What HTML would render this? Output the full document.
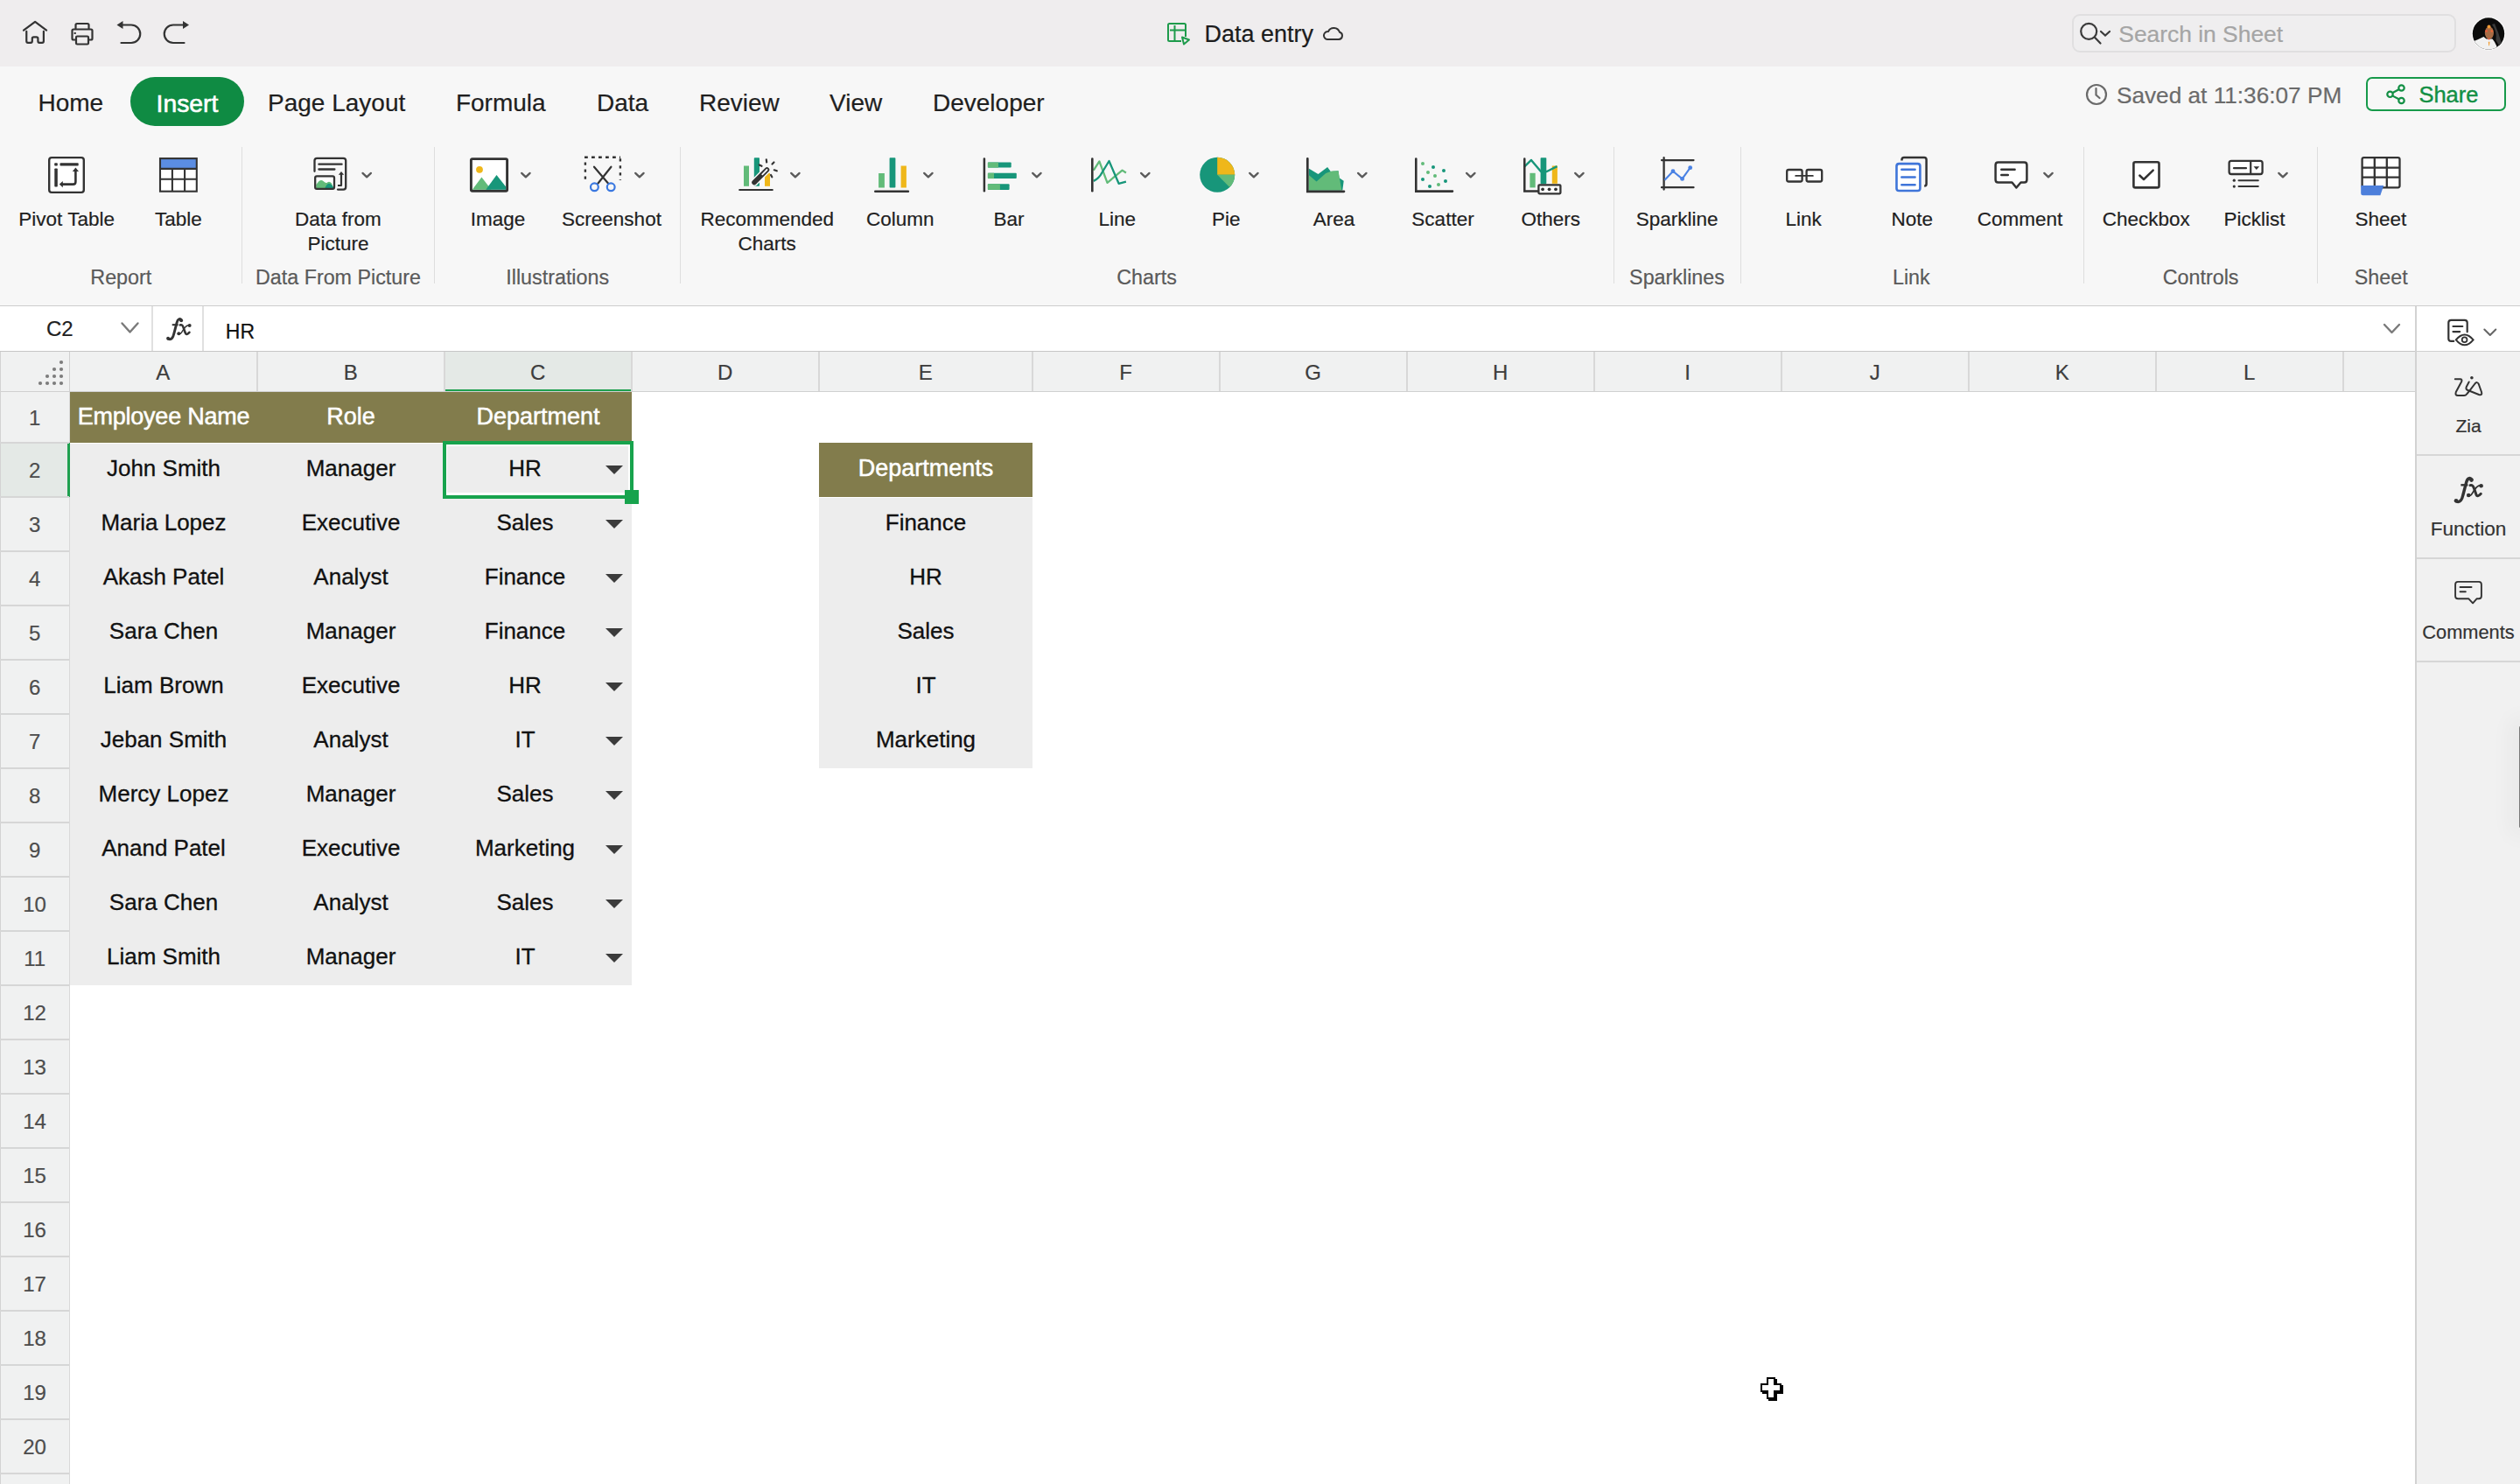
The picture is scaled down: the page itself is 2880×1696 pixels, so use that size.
<!DOCTYPE html>
<html><head><meta charset="utf-8"><title>Data entry</title>
<style>
html,body{margin:0;padding:0;width:2880px;height:1696px;overflow:hidden;background:#fff;}
body{position:relative;font-family:'Liberation Sans', sans-serif;}
.t{position:absolute;white-space:nowrap;line-height:1;-webkit-text-stroke:0.2px currentColor;}
.r{position:absolute;}
.s{position:absolute;overflow:visible;}
</style></head><body>
<div class="r" style="left:0px;top:0px;width:2880px;height:76px;background:#efedee;"></div>
<svg class="s" style="left:20px;top:18px;" width="200" height="40" viewBox="20 18 200 40">
<g fill="none" stroke="#333333" stroke-width="2.2" stroke-linejoin="round" stroke-linecap="round">
<path d="M27,34.7 L40.1,24.8 L53.1,34.7"/>
<path d="M30.25,35.8 V47 Q30.25,48.8 32,48.8 H35 Q36.8,48.8 36.8,47 V44 Q36.8,42.3 38.5,42.3 H41.7 Q43.4,42.3 43.4,44 V47 Q43.4,48.8 45.1,48.8 H48.1 Q49.9,48.8 49.9,47 V35.8"/>
<path d="M86.5,32.5 V28.5 Q86.5,27 88,27 H100 Q101.5,27 101.5,28.5 V32.5"/>
<path d="M86.5,45.5 H84 Q82.5,45.5 82.5,44 V35 Q82.5,33.5 84,33.5 H104 Q105.5,33.5 105.5,35 V44 Q105.5,45.5 104,45.5 H101.5"/>
<rect x="87" y="41.5" width="14" height="9" rx="1.2"/>
<path d="M139.5,28.5 H150 A10.25,10.25 0 0 1 150,49 H138.5"/>
<path d="M209.5,28.5 H198 A10.25,10.25 0 0 0 198,49 H210.5"/>
</g>
<circle cx="85.7" cy="37.9" r="1.2" fill="#333333"/>
<path d="M133.5,28.5 L140.5,24 L140.5,33 Z" fill="#333333"/>
<path d="M216,28.5 L209,24 L209,33 Z" fill="#333333"/>
</svg>
<svg class="s" style="left:1325px;top:20px;" width="45" height="40" viewBox="1325 20 45 40">
<g fill="none" stroke="#1e9b4b" stroke-width="2" stroke-linejoin="round">
<path d="M1350,47 H1336.5 Q1335,47 1335,45.5 V28.5 Q1335,27 1336.5,27 H1353.5 Q1355,27 1355,28.5 V42"/>
<path d="M1337,34.5 H1355 M1342.5,29 V47"/>
<path d="M1351,42.5 L1359,45.5 L1353,50.5 Z" fill="#efeeef"/>
</g></svg>
<div class="t" style="left:1376.40px;top:25.94px;font-size:27px;color:#1c1c1c;font-weight:400;font-family:'Liberation Sans', sans-serif;">Data entry</div>
<svg class="s" style="left:1508px;top:28px;" width="32" height="22" viewBox="1508 28 32 22"><path d="M1517,45 H1530 A4.2,4.2 0 0 0 1531,36.8 A7,7 0 0 0 1518,36 A4.5,4.5 0 0 0 1517,45 Z" fill="none" stroke="#333" stroke-width="2"/></svg>
<div class="r" style="left:2368px;top:16px;width:439px;height:44px;border:2px solid #e0dfe0;border-radius:9px;background:#efeeef;box-sizing:border-box"></div>
<svg class="s" style="left:2370px;top:20px;" width="50" height="36" viewBox="2370 20 50 36"><g fill="none" stroke="#3a3a3a" stroke-width="2.2" stroke-linecap="round"><circle cx="2387.2" cy="35.8" r="9"/><path d="M2393.8,42.6 L2400.5,49.5"/><path d="M2401,36 L2406,40.5 L2411,36"/></g></svg>
<div class="t" style="left:2421.30px;top:25.65px;font-size:26.4px;color:#a5a5a5;font-weight:400;font-family:'Liberation Sans', sans-serif;">Search in Sheet</div>
<svg class="s" style="left:2822px;top:16px;" width="44" height="44" viewBox="2822 16 44 44">
<defs><clipPath id="av"><circle cx="2844" cy="38.5" r="18.2"/></clipPath></defs>
<circle cx="2844" cy="38.5" r="19.3" fill="#fbfbfb"/>
<g clip-path="url(#av)">
<rect x="2822" y="16" width="44" height="46" fill="#0b0b0b"/>
<path d="M2824,48.5 L2831,45.5 L2838.5,42 L2841.5,44.5 L2848.5,44.5 L2851,48 L2853.5,53 L2853,60 L2824,60 Z" fill="#f1f1f1"/>
<path d="M2848,28 Q2854,36 2852.5,46 Q2855,50 2857,54 L2859,50 Q2856,38 2851,27 Z" fill="#3a3a3a"/>
<ellipse cx="2844.9" cy="37.6" rx="5.1" ry="7.2" fill="#a86c45"/>
<circle cx="2844.5" cy="30.5" r="2" fill="#f09a35"/>
<circle cx="2841.6" cy="35.5" r="1.3" fill="#ef5a3a"/><circle cx="2847.8" cy="35.5" r="1.3" fill="#ef6a3a"/>
<circle cx="2844.5" cy="44.5" r="1.1" fill="#ef5a3a"/>
<path d="M2843.8,47.8 H2845.4 L2845,52.3 L2844.3,52.3 Z" fill="#f39a2a"/>
</g></svg>
<div class="r" style="left:0px;top:76px;width:2880px;height:273px;background:#f7f7f7;"></div>
<div class="r" style="left:0px;top:349px;width:2880px;height:1px;background:#cdcdcd;"></div>
<div class="t" style="left:43.50px;top:103.79px;font-size:28px;color:#1f1f1f;font-weight:400;font-family:'Liberation Sans', sans-serif;">Home</div>
<div class="r" style="left:149px;top:88px;width:130px;height:56px;border-radius:28px;background:#0f8b43"></div>
<div class="t" style="left:-186.00px;width:800px;text-align:center;top:103.54px;font-size:28.3px;color:#ffffff;font-weight:400;font-family:'Liberation Sans', sans-serif;-webkit-text-stroke:0.6px #fff">Insert</div>
<div class="t" style="left:306.00px;top:103.79px;font-size:28px;color:#1f1f1f;font-weight:400;font-family:'Liberation Sans', sans-serif;">Page Layout</div>
<div class="t" style="left:520.90px;top:103.79px;font-size:28px;color:#1f1f1f;font-weight:400;font-family:'Liberation Sans', sans-serif;">Formula</div>
<div class="t" style="left:682.00px;top:103.79px;font-size:28px;color:#1f1f1f;font-weight:400;font-family:'Liberation Sans', sans-serif;">Data</div>
<div class="t" style="left:799.00px;top:103.79px;font-size:28px;color:#1f1f1f;font-weight:400;font-family:'Liberation Sans', sans-serif;">Review</div>
<div class="t" style="left:948.10px;top:103.79px;font-size:28px;color:#1f1f1f;font-weight:400;font-family:'Liberation Sans', sans-serif;">View</div>
<div class="t" style="left:1066.00px;top:103.79px;font-size:28px;color:#1f1f1f;font-weight:400;font-family:'Liberation Sans', sans-serif;">Developer</div>
<svg class="s" style="left:2380px;top:92px;" width="32" height="32" viewBox="2380 92 32 32"><g fill="none" stroke="#6a6a6a" stroke-width="2.2" stroke-linecap="round"><circle cx="2396" cy="108" r="11"/><path d="M2395.5,101 V108.5 L2399.5,112"/></g></svg>
<div class="t" style="left:2419.00px;top:95.82px;font-size:26.2px;color:#6b6b6b;font-weight:400;font-family:'Liberation Sans', sans-serif;">Saved at 11:36:07 PM</div>
<div class="r" style="left:2704px;top:88px;width:160px;height:39px;border:2px solid #179a4a;border-radius:7px;box-sizing:border-box"></div>
<svg class="s" style="left:2724px;top:94px;" width="30" height="28" viewBox="2724 94 30 28"><g fill="none" stroke="#128f44" stroke-width="2.2"><circle cx="2731.5" cy="107.8" r="3.2"/><circle cx="2744.5" cy="100.5" r="3.2"/><circle cx="2744.5" cy="115" r="3.2"/><path d="M2734.5,106 L2741.5,102.3 M2734.5,109.6 L2741.5,113.3"/></g></svg>
<div class="t" style="left:2764.40px;top:96.41px;font-size:25.5px;color:#128f44;font-weight:400;font-family:'Liberation Sans', sans-serif;-webkit-text-stroke:0.4px #128f44">Share</div>
<div class="r" style="left:276px;top:168px;width:1px;height:156px;background:#dedede;"></div>
<div class="r" style="left:496px;top:168px;width:1px;height:156px;background:#dedede;"></div>
<div class="r" style="left:777px;top:168px;width:1px;height:156px;background:#dedede;"></div>
<div class="r" style="left:1844px;top:168px;width:1px;height:156px;background:#dedede;"></div>
<div class="r" style="left:1989px;top:168px;width:1px;height:156px;background:#dedede;"></div>
<div class="r" style="left:2381px;top:168px;width:1px;height:156px;background:#dedede;"></div>
<div class="r" style="left:2648px;top:168px;width:1px;height:156px;background:#dedede;"></div>
<div class="t" style="left:-323.90px;width:800px;text-align:center;top:239.55px;font-size:22.5px;color:#1f1f1f;font-weight:400;font-family:'Liberation Sans', sans-serif;">Pivot Table</div>
<div class="t" style="left:-196.10px;width:800px;text-align:center;top:239.55px;font-size:22.5px;color:#1f1f1f;font-weight:400;font-family:'Liberation Sans', sans-serif;">Table</div>
<div class="t" style="left:-13.60px;width:800px;text-align:center;top:239.55px;font-size:22.5px;color:#1f1f1f;font-weight:400;font-family:'Liberation Sans', sans-serif;">Data from</div>
<div class="t" style="left:-13.40px;width:800px;text-align:center;top:268.35px;font-size:22.5px;color:#1f1f1f;font-weight:400;font-family:'Liberation Sans', sans-serif;">Picture</div>
<div class="t" style="left:169.00px;width:800px;text-align:center;top:239.55px;font-size:22.5px;color:#1f1f1f;font-weight:400;font-family:'Liberation Sans', sans-serif;">Image</div>
<div class="t" style="left:299.00px;width:800px;text-align:center;top:239.55px;font-size:22.5px;color:#1f1f1f;font-weight:400;font-family:'Liberation Sans', sans-serif;">Screenshot</div>
<div class="t" style="left:476.70px;width:800px;text-align:center;top:239.55px;font-size:22.5px;color:#1f1f1f;font-weight:400;font-family:'Liberation Sans', sans-serif;">Recommended</div>
<div class="t" style="left:476.70px;width:800px;text-align:center;top:268.35px;font-size:22.5px;color:#1f1f1f;font-weight:400;font-family:'Liberation Sans', sans-serif;">Charts</div>
<div class="t" style="left:628.80px;width:800px;text-align:center;top:239.55px;font-size:22.5px;color:#1f1f1f;font-weight:400;font-family:'Liberation Sans', sans-serif;">Column</div>
<div class="t" style="left:753.00px;width:800px;text-align:center;top:239.55px;font-size:22.5px;color:#1f1f1f;font-weight:400;font-family:'Liberation Sans', sans-serif;">Bar</div>
<div class="t" style="left:876.80px;width:800px;text-align:center;top:239.55px;font-size:22.5px;color:#1f1f1f;font-weight:400;font-family:'Liberation Sans', sans-serif;">Line</div>
<div class="t" style="left:1001.20px;width:800px;text-align:center;top:239.55px;font-size:22.5px;color:#1f1f1f;font-weight:400;font-family:'Liberation Sans', sans-serif;">Pie</div>
<div class="t" style="left:1124.50px;width:800px;text-align:center;top:239.55px;font-size:22.5px;color:#1f1f1f;font-weight:400;font-family:'Liberation Sans', sans-serif;">Area</div>
<div class="t" style="left:1249.00px;width:800px;text-align:center;top:239.55px;font-size:22.5px;color:#1f1f1f;font-weight:400;font-family:'Liberation Sans', sans-serif;">Scatter</div>
<div class="t" style="left:1372.30px;width:800px;text-align:center;top:239.55px;font-size:22.5px;color:#1f1f1f;font-weight:400;font-family:'Liberation Sans', sans-serif;">Others</div>
<div class="t" style="left:1516.70px;width:800px;text-align:center;top:239.55px;font-size:22.5px;color:#1f1f1f;font-weight:400;font-family:'Liberation Sans', sans-serif;">Sparkline</div>
<div class="t" style="left:1661.20px;width:800px;text-align:center;top:239.55px;font-size:22.5px;color:#1f1f1f;font-weight:400;font-family:'Liberation Sans', sans-serif;">Link</div>
<div class="t" style="left:1785.20px;width:800px;text-align:center;top:239.55px;font-size:22.5px;color:#1f1f1f;font-weight:400;font-family:'Liberation Sans', sans-serif;">Note</div>
<div class="t" style="left:1908.60px;width:800px;text-align:center;top:239.55px;font-size:22.5px;color:#1f1f1f;font-weight:400;font-family:'Liberation Sans', sans-serif;">Comment</div>
<div class="t" style="left:2052.70px;width:800px;text-align:center;top:239.55px;font-size:22.5px;color:#1f1f1f;font-weight:400;font-family:'Liberation Sans', sans-serif;">Checkbox</div>
<div class="t" style="left:2176.60px;width:800px;text-align:center;top:239.55px;font-size:22.5px;color:#1f1f1f;font-weight:400;font-family:'Liberation Sans', sans-serif;">Picklist</div>
<div class="t" style="left:2320.90px;width:800px;text-align:center;top:239.55px;font-size:22.5px;color:#1f1f1f;font-weight:400;font-family:'Liberation Sans', sans-serif;">Sheet</div>
<div class="t" style="left:-261.70px;width:800px;text-align:center;top:306.07px;font-size:23.3px;color:#5a5a5a;font-weight:400;font-family:'Liberation Sans', sans-serif;">Report</div>
<div class="t" style="left:-13.50px;width:800px;text-align:center;top:306.07px;font-size:23.3px;color:#5a5a5a;font-weight:400;font-family:'Liberation Sans', sans-serif;">Data From Picture</div>
<div class="t" style="left:237.20px;width:800px;text-align:center;top:306.07px;font-size:23.3px;color:#5a5a5a;font-weight:400;font-family:'Liberation Sans', sans-serif;">Illustrations</div>
<div class="t" style="left:910.50px;width:800px;text-align:center;top:306.07px;font-size:23.3px;color:#5a5a5a;font-weight:400;font-family:'Liberation Sans', sans-serif;">Charts</div>
<div class="t" style="left:1516.50px;width:800px;text-align:center;top:306.07px;font-size:23.3px;color:#5a5a5a;font-weight:400;font-family:'Liberation Sans', sans-serif;">Sparklines</div>
<div class="t" style="left:1784.30px;width:800px;text-align:center;top:306.07px;font-size:23.3px;color:#5a5a5a;font-weight:400;font-family:'Liberation Sans', sans-serif;">Link</div>
<div class="t" style="left:2115.10px;width:800px;text-align:center;top:306.07px;font-size:23.3px;color:#5a5a5a;font-weight:400;font-family:'Liberation Sans', sans-serif;">Controls</div>
<div class="t" style="left:2321.20px;width:800px;text-align:center;top:306.07px;font-size:23.3px;color:#5a5a5a;font-weight:400;font-family:'Liberation Sans', sans-serif;">Sheet</div>
<svg class="s" style="left:411px;top:194px;" width="16.4" height="11.5" viewBox="411 194 16.4 11.5"><path d="M414.5,197.9 L419.2,202.4 L423.9,197.9" fill="none" stroke="#5a5a5a" stroke-width="2.3" stroke-linecap="round" stroke-linejoin="round"/></svg>
<svg class="s" style="left:593px;top:194px;" width="16.4" height="11.5" viewBox="593 194 16.4 11.5"><path d="M596.2,197.9 L600.9000000000001,202.4 L605.6,197.9" fill="none" stroke="#5a5a5a" stroke-width="2.3" stroke-linecap="round" stroke-linejoin="round"/></svg>
<svg class="s" style="left:723px;top:194px;" width="16.4" height="11.5" viewBox="723 194 16.4 11.5"><path d="M726.2,197.9 L730.9000000000001,202.4 L735.6,197.9" fill="none" stroke="#5a5a5a" stroke-width="2.3" stroke-linecap="round" stroke-linejoin="round"/></svg>
<svg class="s" style="left:901px;top:194px;" width="16.4" height="11.5" viewBox="901 194 16.4 11.5"><path d="M904.2,197.9 L908.9000000000001,202.4 L913.6,197.9" fill="none" stroke="#5a5a5a" stroke-width="2.3" stroke-linecap="round" stroke-linejoin="round"/></svg>
<svg class="s" style="left:1053px;top:194px;" width="16.4" height="11.5" viewBox="1053 194 16.4 11.5"><path d="M1056.2,197.9 L1060.9,202.4 L1065.6000000000001,197.9" fill="none" stroke="#5a5a5a" stroke-width="2.3" stroke-linecap="round" stroke-linejoin="round"/></svg>
<svg class="s" style="left:1177px;top:194px;" width="16.4" height="11.5" viewBox="1177 194 16.4 11.5"><path d="M1180.2,197.9 L1184.9,202.4 L1189.6000000000001,197.9" fill="none" stroke="#5a5a5a" stroke-width="2.3" stroke-linecap="round" stroke-linejoin="round"/></svg>
<svg class="s" style="left:1301px;top:194px;" width="16.4" height="11.5" viewBox="1301 194 16.4 11.5"><path d="M1304.1000000000001,197.9 L1308.8000000000002,202.4 L1313.5000000000002,197.9" fill="none" stroke="#5a5a5a" stroke-width="2.3" stroke-linecap="round" stroke-linejoin="round"/></svg>
<svg class="s" style="left:1425px;top:194px;" width="16.4" height="11.5" viewBox="1425 194 16.4 11.5"><path d="M1428.2,197.9 L1432.9,202.4 L1437.6000000000001,197.9" fill="none" stroke="#5a5a5a" stroke-width="2.3" stroke-linecap="round" stroke-linejoin="round"/></svg>
<svg class="s" style="left:1549px;top:194px;" width="16.4" height="11.5" viewBox="1549 194 16.4 11.5"><path d="M1552.1000000000001,197.9 L1556.8000000000002,202.4 L1561.5000000000002,197.9" fill="none" stroke="#5a5a5a" stroke-width="2.3" stroke-linecap="round" stroke-linejoin="round"/></svg>
<svg class="s" style="left:1673px;top:194px;" width="16.4" height="11.5" viewBox="1673 194 16.4 11.5"><path d="M1676.1000000000001,197.9 L1680.8000000000002,202.4 L1685.5000000000002,197.9" fill="none" stroke="#5a5a5a" stroke-width="2.3" stroke-linecap="round" stroke-linejoin="round"/></svg>
<svg class="s" style="left:1797px;top:194px;" width="16.4" height="11.5" viewBox="1797 194 16.4 11.5"><path d="M1800.2,197.9 L1804.9,202.4 L1809.6000000000001,197.9" fill="none" stroke="#5a5a5a" stroke-width="2.3" stroke-linecap="round" stroke-linejoin="round"/></svg>
<svg class="s" style="left:2333px;top:194px;" width="16.4" height="11.5" viewBox="2333 194 16.4 11.5"><path d="M2336.2999999999997,197.9 L2340.9999999999995,202.4 L2345.7,197.9" fill="none" stroke="#5a5a5a" stroke-width="2.3" stroke-linecap="round" stroke-linejoin="round"/></svg>
<svg class="s" style="left:2601px;top:194px;" width="16.4" height="11.5" viewBox="2601 194 16.4 11.5"><path d="M2604.2999999999997,197.9 L2608.9999999999995,202.4 L2613.7,197.9" fill="none" stroke="#5a5a5a" stroke-width="2.3" stroke-linecap="round" stroke-linejoin="round"/></svg>
<svg class="s" style="left:50px;top:172px;" width="56" height="56" viewBox="50 172 56 56">
<rect x="56.2" y="180.1" width="39.6" height="39.8" rx="2.8" fill="#fff" stroke="#333333" stroke-width="2.4"/>
<rect x="62.2" y="186.2" width="3.6" height="3.4" rx="0.8" fill="#333333"/>
<rect x="68.5" y="186.2" width="21.2" height="3.4" rx="0.8" fill="#333333"/>
<rect x="62.3" y="192.4" width="3.5" height="21.2" rx="0.8" fill="#333333"/>
<path d="M71,210.6 H83.5 Q86.4,210.6 86.4,207.7 V195.5" fill="none" stroke="#333333" stroke-width="2.6"/>
<path d="M82.8,196 L86.4,191.6 L90,196 Z" fill="#333333"/>
<path d="M71.8,206.9 L67.8,210.6 L71.8,214.3 Z" fill="#333333"/>
</svg>
<svg class="s" style="left:176px;top:172px;" width="56" height="56" viewBox="176 172 56 56">
<rect x="183" y="181" width="42" height="38" fill="#fff"/>
<rect x="183" y="181.1" width="42" height="11.5" fill="#5b8de3"/>
<rect x="183" y="181.1" width="41.8" height="37.6" fill="none" stroke="#333333" stroke-width="2.1"/>
<path d="M183,192.9 H225 M183,204.8 H225 M196.9,192.9 V219 M211.1,192.9 V219" stroke="#333333" stroke-width="2.1" fill="none"/>
</svg>
<svg class="s" style="left:352px;top:172px;" width="80" height="54" viewBox="352 172 80 54">
<path d="M359.5,195.8 V183.5 Q359.5,180.8 362.2,180.8 H392.4 Q395.2,180.8 395.2,183.6 V213.8 Q395.2,216.6 392.4,216.6 H386" fill="none" stroke="#333333" stroke-width="2.3" stroke-linecap="round"/>
<path d="M364.4,187.7 H390.6 M364.4,193.5 H382.4" stroke="#333333" stroke-width="2.3" stroke-linecap="round"/>
<rect x="360.2" y="201.3" width="21.8" height="14.5" rx="1.8" fill="#fff"/>
<path d="M361.3,215.8 L361.3,211 Q366,203.5 369.5,207 Q372,209.5 373.5,209 Q376.5,206.5 379,209.5 L381,215.8 Z" fill="#62bb79"/>
<path d="M371,215.8 Q373.5,209.5 376,209.8 Q379,210.2 381,214 V215.8 Z" fill="#17967a"/>
<rect x="360.2" y="201.3" width="21.8" height="14.5" rx="1.8" fill="none" stroke="#333333" stroke-width="2.3"/>
<path d="M390,211.8 V198.5 M386,212 H390.8" fill="none" stroke="#333333" stroke-width="2.2"/>
<path d="M386.8,199.8 L390,196 L393.2,199.8 Z" fill="#333333"/>
</svg>
<svg class="s" style="left:530px;top:172px;" width="60" height="54" viewBox="530 172 60 54">
<rect x="538.4" y="181.6" width="41.2" height="36.6" rx="1.5" fill="#fff" stroke="#333333" stroke-width="2.9"/>
<circle cx="548" cy="193.8" r="3.9" fill="#efb71a"/>
<path d="M539.8,216.8 L550.4,202.6 L561.5,216.8 Z" fill="#62bb79"/>
<path d="M555.3,216.8 L567.5,200 L578.2,213.5 V216.8 Z" fill="#17967a"/>
</svg>
<svg class="s" style="left:660px;top:172px;" width="60" height="54" viewBox="660 172 60 54">
<path d="M668,179.8 H709" fill="none" stroke="#333333" stroke-width="2.6" stroke-dasharray="3.8,4.2"/>
<path d="M668.9,185.5 V206" fill="none" stroke="#333333" stroke-width="2.4" stroke-dasharray="3.2,4.8"/>
<path d="M708.9,181.3 V206" fill="none" stroke="#333333" stroke-width="2.4" stroke-dasharray="3.3,4.7"/>
<path d="M679,190.7 L695,209.5 M698.4,190.7 L683.3,209.8" stroke="#333333" stroke-width="2.2" stroke-linecap="round"/>
<circle cx="679.4" cy="213.8" r="4.4" fill="#f7f7f7" stroke="#3a78e0" stroke-width="2.2"/>
<circle cx="698.2" cy="213.8" r="4.4" fill="#f7f7f7" stroke="#3a78e0" stroke-width="2.2"/>
</svg>
<svg class="s" style="left:838px;top:172px;" width="60" height="54" viewBox="838 172 60 54">
<rect x="850" y="189.5" width="6" height="23.3" fill="#62bb79"/>
<rect x="861.8" y="180.2" width="6.2" height="32.6" rx="0.8" fill="#17967a"/>
<rect x="874" y="197.8" width="6" height="15" fill="#efb71a"/>
<path d="M845.2,217 H882.8" stroke="#333333" stroke-width="2.1" stroke-linecap="round"/>
<path d="M862,208.5 L876.5,194" stroke="#f7f7f7" stroke-width="8.5" stroke-linecap="round"/>
<path d="M862,208.5 L876.5,194" stroke="#333333" stroke-width="5.6" stroke-linecap="round"/>
<path d="M871.3,199.3 L876.5,194" stroke="#fff" stroke-width="1.8" stroke-linecap="round"/>
<path d="M875.8,182.3 L876.2,185.5 M884.5,185.5 L882.5,187.5 M884.8,194.3 L887.8,195.3 M867.8,188.5 L870.5,189.8 M881,200 L882.3,202.3" stroke="#333333" stroke-width="2.2" stroke-linecap="round"/>
</svg>
<svg class="s" style="left:994px;top:172px;" width="50" height="54" viewBox="994 172 50 54">
<rect x="1004.1" y="198" width="6.8" height="16.5" fill="#62bb79"/>
<rect x="1016.6" y="180.2" width="6.8" height="34.3" rx="0.8" fill="#17967a"/>
<rect x="1029.6" y="189.5" width="6.3" height="25" fill="#efb71a"/>
<path d="M1000.3,218.8 H1037.9" stroke="#333333" stroke-width="2.6" stroke-linecap="round"/>
</svg>
<svg class="s" style="left:1118px;top:172px;" width="50" height="54" viewBox="1118 172 50 54">
<path d="M1124.9,181.6 V218.3" stroke="#333333" stroke-width="2.5" stroke-linecap="round"/>
<rect x="1128.9" y="185.6" width="26.8" height="6" rx="1" fill="#17967a"/>
<rect x="1128.9" y="185.6" width="12.1" height="6" fill="#62bb79"/>
<rect x="1128.9" y="197.7" width="32.9" height="6.4" rx="1" fill="#17967a"/>
<rect x="1128.9" y="197.7" width="7.1" height="6.4" fill="#62bb79"/>
<rect x="1128.9" y="210.2" width="24.7" height="6.7" rx="1" fill="#17967a"/>
<rect x="1128.9" y="210.2" width="14" height="6.7" fill="#62bb79"/>
</svg>
<svg class="s" style="left:1242px;top:172px;" width="52" height="54" viewBox="1242 172 52 54">
<path d="M1249.8,194.6 L1256.4,184.4 L1265.5,208.8 L1282.6,194.6 L1286.9,197.5" fill="none" stroke="#62bb79" stroke-width="2.3" stroke-linejoin="round"/>
<path d="M1249.8,206.9 Q1256,204 1259.3,197.5 L1267.5,184 L1278.6,209.8 L1286.9,207.7" fill="none" stroke="#17967a" stroke-width="2.3" stroke-linejoin="round"/>
<path d="M1248.3,181.6 V218.3" stroke="#333333" stroke-width="2.6" stroke-linecap="round"/>
</svg>
<svg class="s" style="left:1366px;top:175px;" width="50" height="50" viewBox="1366 175 50 50">
<circle cx="1391.2" cy="199.8" r="20" fill="#17967a"/>
<path d="M1391.2,199.8 V179.8 A20,20 0 0 1 1411.2,199.8 Z" fill="#efb71a"/>
<path d="M1391.2,199.8 H1411.2 A20,20 0 0 1 1405.3,214 Z" fill="#62bb79"/>
</svg>
<svg class="s" style="left:1488px;top:175px;" width="54" height="50" viewBox="1488 175 54 50">
<path d="M1495.7,192.4 L1506.5,199 L1517.1,191 L1521,196.2 L1529.5,195.2 L1530.5,203.3 L1535.7,206.7 L1534.3,217.6 H1495.7 Z" fill="#17967a"/>
<path d="M1495.7,200 L1504.6,207.6 L1515.2,198.1 L1522,195.5 L1529.5,195.2 L1533.3,217.6 H1495.7 Z" fill="#62bb79"/>
<path d="M1494.3,181.3 V218.8 H1536" fill="none" stroke="#333333" stroke-width="2.7" stroke-linecap="round" stroke-linejoin="miter"/>
</svg>
<svg class="s" style="left:1612px;top:175px;" width="54" height="50" viewBox="1612 175 54 50">
<circle cx="1626" cy="186.9" r="2" fill="#62bb79"/><circle cx="1638" cy="190.9" r="2" fill="#17967a"/><circle cx="1650" cy="194.9" r="2" fill="#17967a"/><circle cx="1632" cy="197.1" r="2" fill="#62bb79"/><circle cx="1640" cy="200.9" r="2" fill="#62bb79"/><circle cx="1626" cy="204.9" r="2" fill="#17967a"/><circle cx="1652" cy="206.9" r="2" fill="#17967a"/><circle cx="1644" cy="211.1" r="2" fill="#62bb79"/><circle cx="1634" cy="212.9" r="2" fill="#17967a"/>
<path d="M1618.3,181.6 V218.6 H1660" fill="none" stroke="#333333" stroke-width="2.6" stroke-linecap="round"/>
</svg>
<svg class="s" style="left:1736px;top:175px;" width="54" height="52" viewBox="1736 175 54 52">
<rect x="1748.4" y="197.8" width="6.3" height="16.6" fill="#62bb79"/>
<rect x="1760.6" y="180.2" width="6.7" height="30" rx="0.8" fill="#17967a"/>
<rect x="1773.8" y="189.5" width="6.1" height="20.3" fill="#efb71a"/>
<path d="M1742,190.7 L1750,182.9 L1761,196 H1767.8 L1779.5,190.2" fill="none" stroke="#17967a" stroke-width="2.4" stroke-linejoin="round"/>
<path d="M1742.3,181.6 V218.4 H1757.5" fill="none" stroke="#333333" stroke-width="2.5" stroke-linecap="round"/>
<rect x="1758.4" y="211.3" width="25" height="10" rx="1" fill="#fff" stroke="#333333" stroke-width="2.3"/>
<circle cx="1763.1" cy="216.3" r="1.9" fill="#333333"/><circle cx="1770.6" cy="216.3" r="1.9" fill="#333333"/><circle cx="1778" cy="216.3" r="1.9" fill="#333333"/>
</svg>
<svg class="s" style="left:1892px;top:174px;" width="50" height="50" viewBox="1892 174 50 50">
<path d="M1901.6,180.2 V216.5 M1899,183.1 H1935.5 M1899,214.2 H1935.5" fill="none" stroke="#333333" stroke-width="2.3" stroke-linecap="round"/>
<path d="M1902.5,205.8 L1912,195.7 L1922.6,204.4 L1931.7,191.7" fill="none" stroke="#4a82e4" stroke-width="2.1" stroke-linejoin="round"/>
<circle cx="1912" cy="195.7" r="2.4" fill="#4a82e4"/><circle cx="1922.6" cy="204.4" r="2.4" fill="#4a82e4"/><circle cx="1931.7" cy="191.7" r="2.4" fill="#4a82e4"/>
</svg>
<svg class="s" style="left:2036px;top:185px;" width="54" height="30" viewBox="2036 185 54 30">
<rect x="2042.2" y="194" width="17.4" height="13.5" rx="2" fill="#fff" stroke="#333333" stroke-width="2.3"/>
<rect x="2064.6" y="194" width="17.6" height="13.5" rx="2" fill="#fff" stroke="#333333" stroke-width="2.3"/>
<path d="M2052.2,200.9 H2071.8" stroke="#333333" stroke-width="1.9" stroke-linecap="round"/>
</svg>
<svg class="s" style="left:2160px;top:174px;" width="50" height="50" viewBox="2160 174 50 50">
<path d="M2173.5,183.5 V182.5 Q2173.5,179.9 2176.1,179.9 H2199 Q2201.6,179.9 2201.6,182.5 V210 Q2201.6,212.6 2199.2,212.6" fill="none" stroke="#333333" stroke-width="2.5"/>
<rect x="2167.5" y="187.1" width="26.9" height="30.9" rx="2.8" fill="#fff" stroke="#3f75d9" stroke-width="2.6"/>
<path d="M2173.3,193.8 H2188.6 M2173.3,202.6 H2188.6 M2173.3,211.3 H2188.6" stroke="#3f75d9" stroke-width="2.5" stroke-linecap="round"/>
</svg>
<svg class="s" style="left:2274px;top:178px;" width="50" height="45" viewBox="2274 178 50 45">
<path d="M2283.6,185.5 H2313.4 Q2316.4,185.5 2316.4,188.5 V205.5 Q2316.4,208.5 2313.4,208.5 H2309.5 L2304.4,214.5 L2299.5,208.5 H2283.6 Q2280.6,208.5 2280.6,205.5 V188.5 Q2280.6,185.5 2283.6,185.5 Z" fill="#fff" stroke="#333333" stroke-width="2.5" stroke-linejoin="round"/>
<path d="M2287.3,193.8 H2302.6 M2287.3,200 H2294.8" stroke="#333333" stroke-width="2.5" stroke-linecap="round"/>
</svg>
<svg class="s" style="left:2432px;top:178px;" width="42" height="42" viewBox="2432 178 42 42">
<rect x="2438.4" y="185.3" width="29.1" height="29.1" rx="2" fill="#fff" stroke="#333333" stroke-width="2.6"/>
<path d="M2445.3,200.5 L2450,205 L2460.7,194.6" fill="none" stroke="#333333" stroke-width="2.5" stroke-linecap="round" stroke-linejoin="round"/>
</svg>
<svg class="s" style="left:2540px;top:176px;" width="52" height="44" viewBox="2540 176 52 44">
<rect x="2547.6" y="183.8" width="38" height="15.2" rx="2.5" fill="#fff" stroke="#333333" stroke-width="2.3"/>
<path d="M2572.2,183.8 V199" stroke="#333333" stroke-width="2.2"/>
<path d="M2553,192.2 H2567" stroke="#333333" stroke-width="2.2" stroke-linecap="round"/>
<path d="M2575.5,190.3 H2582.2 L2578.85,193.9 Z" fill="#333333"/>
<circle cx="2553.3" cy="206.2" r="1.6" fill="#333333"/><circle cx="2553.3" cy="213.1" r="1.6" fill="#333333"/>
<path d="M2558.5,206.2 H2580.8 M2558.5,213 H2580.8" stroke="#333333" stroke-width="2" stroke-linecap="round"/>
</svg>
<svg class="s" style="left:2692px;top:174px;" width="56" height="54" viewBox="2692 174 56 54">
<rect x="2699.6" y="180.1" width="42.9" height="34.2" rx="2" fill="#fff" stroke="#333333" stroke-width="2.3"/>
<path d="M2713.8,180.1 V214.3 M2727.8,180.1 V214.3 M2699.6,191.7 H2742.5 M2699.6,202.7 H2742.5" stroke="#333333" stroke-width="2.3"/>
<path d="M2698.2,212 H2724.2 L2720.4,223.3 H2700.5 Q2698.2,223.3 2698.2,221 Z" fill="#4d7fdb"/>
</svg>
<div class="r" style="left:0px;top:350px;width:2761px;height:51px;background:#ffffff;"></div>
<div class="r" style="left:2761px;top:350px;width:119px;height:51px;background:#ffffff;"></div>
<div class="r" style="left:0px;top:401px;width:2880px;height:1px;background:#c6c6c6;"></div>
<div class="t" style="left:53.00px;top:363.88px;font-size:24px;color:#1f1f1f;font-weight:400;font-family:'Liberation Sans', sans-serif;">C2</div>
<svg class="s" style="left:136px;top:366px;" width="25" height="17" viewBox="136 366 25 17"><path d="M139.5,369.5 L148.5,379.5 L157.5,369.5" fill="none" stroke="#7a7a7a" stroke-width="2.4" stroke-linecap="round" stroke-linejoin="round"/></svg>
<div class="r" style="left:173px;top:350px;width:2px;height:51px;background:#e0e0e0;"></div>
<div class="r" style="left:231px;top:350px;width:2px;height:51px;background:#e0e0e0;"></div>
<svg class="s" style="left:186px;top:360px;" width="36" height="34" viewBox="186 360 36 34"><g transform="translate(189.5,363.2) scale(0.86)" fill="#333333" stroke="#333333" stroke-linecap="round"><path d="M20.8,3.2 C19,0.2 15.8,1.5 14.6,6.5 L10.8,21 C9.8,25.5 8,29.5 3.5,28.2" fill="none" stroke-width="3.4"/><circle cx="20.5" cy="3.6" r="2.3" stroke="none"/><circle cx="3.0" cy="27.3" r="2.3" stroke="none"/><path d="M8.4,9.3 H16.4" stroke-width="2.4" stroke-linecap="butt"/><path d="M19.0,9.6 C21.8,8.8 22.6,10.5 23.6,13.5 L25.8,19.8 C26.6,22.6 28.6,22.4 31.3,19.3" fill="none" stroke-width="3"/><path d="M31.6,10.0 C28.4,9.0 26.6,11.0 24.2,14.5 L21.0,19.5 C19.8,21.5 18.5,21.8 17.2,21.2" fill="none" stroke-width="1.7"/><circle cx="31.6" cy="10.3" r="2.3" stroke="none"/><circle cx="17.2" cy="21.0" r="2.3" stroke="none"/></g></svg>
<div class="t" style="left:257.80px;top:368.43px;font-size:23px;color:#111111;font-weight:400;font-family:'Liberation Sans', sans-serif;">HR</div>
<svg class="s" style="left:2722px;top:368px;" width="24" height="16" viewBox="2722 368 24 16"><path d="M2725,371 L2733.5,380 L2742,371" fill="none" stroke="#7a7a7a" stroke-width="2.4" stroke-linecap="round" stroke-linejoin="round"/></svg>
<div class="r" style="left:2760px;top:350px;width:2px;height:1346px;background:#d2d2d2;"></div>
<div class="r" style="left:0px;top:402px;width:2760px;height:45px;background:#f0f1f1;"></div>
<div class="r" style="left:0px;top:447px;width:2760px;height:1px;background:#d0d0d0;"></div>
<div class="r" style="left:509px;top:402px;width:213px;height:45px;background:#e4e9e6;"></div>
<div class="r" style="left:509px;top:445px;width:213px;height:2px;background:#1fa04f;"></div>
<div class="r" style="left:293px;top:402px;width:2px;height:45px;background:#d8d8d8;"></div>
<div class="r" style="left:507px;top:402px;width:2px;height:45px;background:#d8d8d8;"></div>
<div class="r" style="left:721px;top:402px;width:2px;height:45px;background:#d8d8d8;"></div>
<div class="r" style="left:935px;top:402px;width:2px;height:45px;background:#d8d8d8;"></div>
<div class="r" style="left:1179px;top:402px;width:2px;height:45px;background:#d8d8d8;"></div>
<div class="r" style="left:1393px;top:402px;width:2px;height:45px;background:#d8d8d8;"></div>
<div class="r" style="left:1607px;top:402px;width:2px;height:45px;background:#d8d8d8;"></div>
<div class="r" style="left:1821px;top:402px;width:2px;height:45px;background:#d8d8d8;"></div>
<div class="r" style="left:2035px;top:402px;width:2px;height:45px;background:#d8d8d8;"></div>
<div class="r" style="left:2249px;top:402px;width:2px;height:45px;background:#d8d8d8;"></div>
<div class="r" style="left:2463px;top:402px;width:2px;height:45px;background:#d8d8d8;"></div>
<div class="r" style="left:2677px;top:402px;width:2px;height:45px;background:#d8d8d8;"></div>
<div class="t" style="left:-213.80px;width:800px;text-align:center;top:414.48px;font-size:24px;color:#3d3d3d;font-weight:400;font-family:'Liberation Sans', sans-serif;">A</div>
<div class="t" style="left:0.70px;width:800px;text-align:center;top:414.48px;font-size:24px;color:#3d3d3d;font-weight:400;font-family:'Liberation Sans', sans-serif;">B</div>
<div class="t" style="left:214.70px;width:800px;text-align:center;top:414.48px;font-size:24px;color:#3d3d3d;font-weight:400;font-family:'Liberation Sans', sans-serif;">C</div>
<div class="t" style="left:428.70px;width:800px;text-align:center;top:414.48px;font-size:24px;color:#3d3d3d;font-weight:400;font-family:'Liberation Sans', sans-serif;">D</div>
<div class="t" style="left:657.70px;width:800px;text-align:center;top:414.48px;font-size:24px;color:#3d3d3d;font-weight:400;font-family:'Liberation Sans', sans-serif;">E</div>
<div class="t" style="left:886.70px;width:800px;text-align:center;top:414.48px;font-size:24px;color:#3d3d3d;font-weight:400;font-family:'Liberation Sans', sans-serif;">F</div>
<div class="t" style="left:1100.70px;width:800px;text-align:center;top:414.48px;font-size:24px;color:#3d3d3d;font-weight:400;font-family:'Liberation Sans', sans-serif;">G</div>
<div class="t" style="left:1314.70px;width:800px;text-align:center;top:414.48px;font-size:24px;color:#3d3d3d;font-weight:400;font-family:'Liberation Sans', sans-serif;">H</div>
<div class="t" style="left:1528.70px;width:800px;text-align:center;top:414.48px;font-size:24px;color:#3d3d3d;font-weight:400;font-family:'Liberation Sans', sans-serif;">I</div>
<div class="t" style="left:1742.70px;width:800px;text-align:center;top:414.48px;font-size:24px;color:#3d3d3d;font-weight:400;font-family:'Liberation Sans', sans-serif;">J</div>
<div class="t" style="left:1956.70px;width:800px;text-align:center;top:414.48px;font-size:24px;color:#3d3d3d;font-weight:400;font-family:'Liberation Sans', sans-serif;">K</div>
<div class="t" style="left:2170.70px;width:800px;text-align:center;top:414.48px;font-size:24px;color:#3d3d3d;font-weight:400;font-family:'Liberation Sans', sans-serif;">L</div>
<div class="r" style="left:79px;top:402px;width:1px;height:46px;background:#d0d0d0;"></div>
<svg class="s" style="left:40px;top:408px;" width="36" height="36" viewBox="40 408 36 36"><circle cx="70" cy="414" r="2.1" fill="#7c7c7c"/><circle cx="62" cy="422" r="2.1" fill="#7c7c7c"/><circle cx="70" cy="422" r="2.1" fill="#7c7c7c"/><circle cx="54" cy="430" r="2.1" fill="#7c7c7c"/><circle cx="62" cy="430" r="2.1" fill="#7c7c7c"/><circle cx="70" cy="430" r="2.1" fill="#7c7c7c"/><circle cx="46" cy="438" r="2.1" fill="#7c7c7c"/><circle cx="54" cy="438" r="2.1" fill="#7c7c7c"/><circle cx="62" cy="438" r="2.1" fill="#7c7c7c"/><circle cx="70" cy="438" r="2.1" fill="#7c7c7c"/></svg>
<div class="r" style="left:0px;top:448px;width:79px;height:1248px;background:#f0f1f1;"></div>
<div class="r" style="left:0px;top:402px;width:1px;height:1294px;background:#d3d3d3;"></div>
<div class="r" style="left:79px;top:448px;width:1px;height:1248px;background:#d9d9d9;"></div>
<div class="r" style="left:1px;top:507px;width:78px;height:60px;background:#e4e9e6;"></div>
<div class="r" style="left:77px;top:506px;width:3px;height:62px;background:#1fa04f;"></div>
<div class="r" style="left:0px;top:505px;width:79px;height:2px;background:#d6d6d6;"></div>
<div class="r" style="left:0px;top:567px;width:79px;height:2px;background:#d6d6d6;"></div>
<div class="r" style="left:0px;top:629px;width:79px;height:2px;background:#d6d6d6;"></div>
<div class="r" style="left:0px;top:691px;width:79px;height:2px;background:#d6d6d6;"></div>
<div class="r" style="left:0px;top:753px;width:79px;height:2px;background:#d6d6d6;"></div>
<div class="r" style="left:0px;top:815px;width:79px;height:2px;background:#d6d6d6;"></div>
<div class="r" style="left:0px;top:877px;width:79px;height:2px;background:#d6d6d6;"></div>
<div class="r" style="left:0px;top:939px;width:79px;height:2px;background:#d6d6d6;"></div>
<div class="r" style="left:0px;top:1001px;width:79px;height:2px;background:#d6d6d6;"></div>
<div class="r" style="left:0px;top:1063px;width:79px;height:2px;background:#d6d6d6;"></div>
<div class="r" style="left:0px;top:1125px;width:79px;height:2px;background:#d6d6d6;"></div>
<div class="r" style="left:0px;top:1187px;width:79px;height:2px;background:#d6d6d6;"></div>
<div class="r" style="left:0px;top:1249px;width:79px;height:2px;background:#d6d6d6;"></div>
<div class="r" style="left:0px;top:1311px;width:79px;height:2px;background:#d6d6d6;"></div>
<div class="r" style="left:0px;top:1373px;width:79px;height:2px;background:#d6d6d6;"></div>
<div class="r" style="left:0px;top:1435px;width:79px;height:2px;background:#d6d6d6;"></div>
<div class="r" style="left:0px;top:1497px;width:79px;height:2px;background:#d6d6d6;"></div>
<div class="r" style="left:0px;top:1559px;width:79px;height:2px;background:#d6d6d6;"></div>
<div class="r" style="left:0px;top:1621px;width:79px;height:2px;background:#d6d6d6;"></div>
<div class="r" style="left:0px;top:1683px;width:79px;height:2px;background:#d6d6d6;"></div>
<div class="r" style="left:0px;top:1745px;width:79px;height:2px;background:#d6d6d6;"></div>
<div class="t" style="left:-360.40px;width:800px;text-align:center;top:466.48px;font-size:24px;color:#4d4d4d;font-weight:400;font-family:'Liberation Sans', sans-serif;">1</div>
<div class="t" style="left:-360.40px;width:800px;text-align:center;top:526.48px;font-size:24px;color:#4d4d4d;font-weight:400;font-family:'Liberation Sans', sans-serif;">2</div>
<div class="t" style="left:-360.40px;width:800px;text-align:center;top:588.48px;font-size:24px;color:#4d4d4d;font-weight:400;font-family:'Liberation Sans', sans-serif;">3</div>
<div class="t" style="left:-360.40px;width:800px;text-align:center;top:650.48px;font-size:24px;color:#4d4d4d;font-weight:400;font-family:'Liberation Sans', sans-serif;">4</div>
<div class="t" style="left:-360.40px;width:800px;text-align:center;top:712.48px;font-size:24px;color:#4d4d4d;font-weight:400;font-family:'Liberation Sans', sans-serif;">5</div>
<div class="t" style="left:-360.40px;width:800px;text-align:center;top:774.48px;font-size:24px;color:#4d4d4d;font-weight:400;font-family:'Liberation Sans', sans-serif;">6</div>
<div class="t" style="left:-360.40px;width:800px;text-align:center;top:836.48px;font-size:24px;color:#4d4d4d;font-weight:400;font-family:'Liberation Sans', sans-serif;">7</div>
<div class="t" style="left:-360.40px;width:800px;text-align:center;top:898.48px;font-size:24px;color:#4d4d4d;font-weight:400;font-family:'Liberation Sans', sans-serif;">8</div>
<div class="t" style="left:-360.40px;width:800px;text-align:center;top:960.48px;font-size:24px;color:#4d4d4d;font-weight:400;font-family:'Liberation Sans', sans-serif;">9</div>
<div class="t" style="left:-360.40px;width:800px;text-align:center;top:1022.48px;font-size:24px;color:#4d4d4d;font-weight:400;font-family:'Liberation Sans', sans-serif;">10</div>
<div class="t" style="left:-360.40px;width:800px;text-align:center;top:1084.48px;font-size:24px;color:#4d4d4d;font-weight:400;font-family:'Liberation Sans', sans-serif;">11</div>
<div class="t" style="left:-360.40px;width:800px;text-align:center;top:1146.48px;font-size:24px;color:#4d4d4d;font-weight:400;font-family:'Liberation Sans', sans-serif;">12</div>
<div class="t" style="left:-360.40px;width:800px;text-align:center;top:1208.48px;font-size:24px;color:#4d4d4d;font-weight:400;font-family:'Liberation Sans', sans-serif;">13</div>
<div class="t" style="left:-360.40px;width:800px;text-align:center;top:1270.48px;font-size:24px;color:#4d4d4d;font-weight:400;font-family:'Liberation Sans', sans-serif;">14</div>
<div class="t" style="left:-360.40px;width:800px;text-align:center;top:1332.48px;font-size:24px;color:#4d4d4d;font-weight:400;font-family:'Liberation Sans', sans-serif;">15</div>
<div class="t" style="left:-360.40px;width:800px;text-align:center;top:1394.48px;font-size:24px;color:#4d4d4d;font-weight:400;font-family:'Liberation Sans', sans-serif;">16</div>
<div class="t" style="left:-360.40px;width:800px;text-align:center;top:1456.48px;font-size:24px;color:#4d4d4d;font-weight:400;font-family:'Liberation Sans', sans-serif;">17</div>
<div class="t" style="left:-360.40px;width:800px;text-align:center;top:1518.48px;font-size:24px;color:#4d4d4d;font-weight:400;font-family:'Liberation Sans', sans-serif;">18</div>
<div class="t" style="left:-360.40px;width:800px;text-align:center;top:1580.48px;font-size:24px;color:#4d4d4d;font-weight:400;font-family:'Liberation Sans', sans-serif;">19</div>
<div class="t" style="left:-360.40px;width:800px;text-align:center;top:1642.48px;font-size:24px;color:#4d4d4d;font-weight:400;font-family:'Liberation Sans', sans-serif;">20</div>
<div class="r" style="left:80px;top:448px;width:2680px;height:1248px;background:#ffffff;"></div>
<div class="r" style="left:80px;top:448px;width:642px;height:58px;background:#827c4c;"></div>
<div class="r" style="left:80px;top:507px;width:642px;height:619px;background:#ededed;"></div>
<div class="r" style="left:936px;top:506px;width:244px;height:62px;background:#827c4c;"></div>
<div class="r" style="left:936px;top:569px;width:244px;height:309px;background:#ededed;"></div>
<div class="t" style="left:-213.00px;width:800px;text-align:center;top:462.54px;font-size:27px;color:#ffffff;font-weight:400;font-family:'Liberation Sans', sans-serif;-webkit-text-stroke:0.5px #fff;letter-spacing:-0.25px">Employee Name</div>
<div class="t" style="left:1.00px;width:800px;text-align:center;top:462.54px;font-size:27px;color:#ffffff;font-weight:400;font-family:'Liberation Sans', sans-serif;-webkit-text-stroke:0.5px #fff">Role</div>
<div class="t" style="left:215.00px;width:800px;text-align:center;top:462.54px;font-size:27px;color:#ffffff;font-weight:400;font-family:'Liberation Sans', sans-serif;-webkit-text-stroke:0.5px #fff">Department</div>
<div class="t" style="left:-213.00px;width:800px;text-align:center;top:522.19px;font-size:26px;color:#111111;font-weight:400;font-family:'Liberation Sans', sans-serif;-webkit-text-stroke:0.3px #111;">John Smith</div>
<div class="t" style="left:1.00px;width:800px;text-align:center;top:522.19px;font-size:26px;color:#111111;font-weight:400;font-family:'Liberation Sans', sans-serif;-webkit-text-stroke:0.3px #111;">Manager</div>
<div class="t" style="left:200.00px;width:800px;text-align:center;top:522.19px;font-size:26px;color:#111111;font-weight:400;font-family:'Liberation Sans', sans-serif;-webkit-text-stroke:0.3px #111;">HR</div>
<svg class="s" style="left:690px;top:530px;" width="24" height="14" viewBox="690 530 24 14"><path d="M692,532 H712 L702,542 Z" fill="#3b3b3b"/></svg>
<div class="t" style="left:-213.00px;width:800px;text-align:center;top:584.19px;font-size:26px;color:#111111;font-weight:400;font-family:'Liberation Sans', sans-serif;-webkit-text-stroke:0.3px #111;">Maria Lopez</div>
<div class="t" style="left:1.00px;width:800px;text-align:center;top:584.19px;font-size:26px;color:#111111;font-weight:400;font-family:'Liberation Sans', sans-serif;-webkit-text-stroke:0.3px #111;">Executive</div>
<div class="t" style="left:200.00px;width:800px;text-align:center;top:584.19px;font-size:26px;color:#111111;font-weight:400;font-family:'Liberation Sans', sans-serif;-webkit-text-stroke:0.3px #111;">Sales</div>
<svg class="s" style="left:690px;top:592px;" width="24" height="14" viewBox="690 592 24 14"><path d="M692,594 H712 L702,604 Z" fill="#3b3b3b"/></svg>
<div class="t" style="left:-213.00px;width:800px;text-align:center;top:646.19px;font-size:26px;color:#111111;font-weight:400;font-family:'Liberation Sans', sans-serif;-webkit-text-stroke:0.3px #111;">Akash Patel</div>
<div class="t" style="left:1.00px;width:800px;text-align:center;top:646.19px;font-size:26px;color:#111111;font-weight:400;font-family:'Liberation Sans', sans-serif;-webkit-text-stroke:0.3px #111;">Analyst</div>
<div class="t" style="left:200.00px;width:800px;text-align:center;top:646.19px;font-size:26px;color:#111111;font-weight:400;font-family:'Liberation Sans', sans-serif;-webkit-text-stroke:0.3px #111;">Finance</div>
<svg class="s" style="left:690px;top:654px;" width="24" height="14" viewBox="690 654 24 14"><path d="M692,656 H712 L702,666 Z" fill="#3b3b3b"/></svg>
<div class="t" style="left:-213.00px;width:800px;text-align:center;top:708.19px;font-size:26px;color:#111111;font-weight:400;font-family:'Liberation Sans', sans-serif;-webkit-text-stroke:0.3px #111;">Sara Chen</div>
<div class="t" style="left:1.00px;width:800px;text-align:center;top:708.19px;font-size:26px;color:#111111;font-weight:400;font-family:'Liberation Sans', sans-serif;-webkit-text-stroke:0.3px #111;">Manager</div>
<div class="t" style="left:200.00px;width:800px;text-align:center;top:708.19px;font-size:26px;color:#111111;font-weight:400;font-family:'Liberation Sans', sans-serif;-webkit-text-stroke:0.3px #111;">Finance</div>
<svg class="s" style="left:690px;top:716px;" width="24" height="14" viewBox="690 716 24 14"><path d="M692,718 H712 L702,728 Z" fill="#3b3b3b"/></svg>
<div class="t" style="left:-213.00px;width:800px;text-align:center;top:770.19px;font-size:26px;color:#111111;font-weight:400;font-family:'Liberation Sans', sans-serif;-webkit-text-stroke:0.3px #111;">Liam Brown</div>
<div class="t" style="left:1.00px;width:800px;text-align:center;top:770.19px;font-size:26px;color:#111111;font-weight:400;font-family:'Liberation Sans', sans-serif;-webkit-text-stroke:0.3px #111;">Executive</div>
<div class="t" style="left:200.00px;width:800px;text-align:center;top:770.19px;font-size:26px;color:#111111;font-weight:400;font-family:'Liberation Sans', sans-serif;-webkit-text-stroke:0.3px #111;">HR</div>
<svg class="s" style="left:690px;top:778px;" width="24" height="14" viewBox="690 778 24 14"><path d="M692,780 H712 L702,790 Z" fill="#3b3b3b"/></svg>
<div class="t" style="left:-213.00px;width:800px;text-align:center;top:832.19px;font-size:26px;color:#111111;font-weight:400;font-family:'Liberation Sans', sans-serif;-webkit-text-stroke:0.3px #111;">Jeban Smith</div>
<div class="t" style="left:1.00px;width:800px;text-align:center;top:832.19px;font-size:26px;color:#111111;font-weight:400;font-family:'Liberation Sans', sans-serif;-webkit-text-stroke:0.3px #111;">Analyst</div>
<div class="t" style="left:200.00px;width:800px;text-align:center;top:832.19px;font-size:26px;color:#111111;font-weight:400;font-family:'Liberation Sans', sans-serif;-webkit-text-stroke:0.3px #111;">IT</div>
<svg class="s" style="left:690px;top:840px;" width="24" height="14" viewBox="690 840 24 14"><path d="M692,842 H712 L702,852 Z" fill="#3b3b3b"/></svg>
<div class="t" style="left:-213.00px;width:800px;text-align:center;top:894.19px;font-size:26px;color:#111111;font-weight:400;font-family:'Liberation Sans', sans-serif;-webkit-text-stroke:0.3px #111;">Mercy Lopez</div>
<div class="t" style="left:1.00px;width:800px;text-align:center;top:894.19px;font-size:26px;color:#111111;font-weight:400;font-family:'Liberation Sans', sans-serif;-webkit-text-stroke:0.3px #111;">Manager</div>
<div class="t" style="left:200.00px;width:800px;text-align:center;top:894.19px;font-size:26px;color:#111111;font-weight:400;font-family:'Liberation Sans', sans-serif;-webkit-text-stroke:0.3px #111;">Sales</div>
<svg class="s" style="left:690px;top:902px;" width="24" height="14" viewBox="690 902 24 14"><path d="M692,904 H712 L702,914 Z" fill="#3b3b3b"/></svg>
<div class="t" style="left:-213.00px;width:800px;text-align:center;top:956.19px;font-size:26px;color:#111111;font-weight:400;font-family:'Liberation Sans', sans-serif;-webkit-text-stroke:0.3px #111;">Anand Patel</div>
<div class="t" style="left:1.00px;width:800px;text-align:center;top:956.19px;font-size:26px;color:#111111;font-weight:400;font-family:'Liberation Sans', sans-serif;-webkit-text-stroke:0.3px #111;">Executive</div>
<div class="t" style="left:200.00px;width:800px;text-align:center;top:956.19px;font-size:26px;color:#111111;font-weight:400;font-family:'Liberation Sans', sans-serif;-webkit-text-stroke:0.3px #111;">Marketing</div>
<svg class="s" style="left:690px;top:964px;" width="24" height="14" viewBox="690 964 24 14"><path d="M692,966 H712 L702,976 Z" fill="#3b3b3b"/></svg>
<div class="t" style="left:-213.00px;width:800px;text-align:center;top:1018.19px;font-size:26px;color:#111111;font-weight:400;font-family:'Liberation Sans', sans-serif;-webkit-text-stroke:0.3px #111;">Sara Chen</div>
<div class="t" style="left:1.00px;width:800px;text-align:center;top:1018.19px;font-size:26px;color:#111111;font-weight:400;font-family:'Liberation Sans', sans-serif;-webkit-text-stroke:0.3px #111;">Analyst</div>
<div class="t" style="left:200.00px;width:800px;text-align:center;top:1018.19px;font-size:26px;color:#111111;font-weight:400;font-family:'Liberation Sans', sans-serif;-webkit-text-stroke:0.3px #111;">Sales</div>
<svg class="s" style="left:690px;top:1026px;" width="24" height="14" viewBox="690 1026 24 14"><path d="M692,1028 H712 L702,1038 Z" fill="#3b3b3b"/></svg>
<div class="t" style="left:-213.00px;width:800px;text-align:center;top:1080.19px;font-size:26px;color:#111111;font-weight:400;font-family:'Liberation Sans', sans-serif;-webkit-text-stroke:0.3px #111;">Liam Smith</div>
<div class="t" style="left:1.00px;width:800px;text-align:center;top:1080.19px;font-size:26px;color:#111111;font-weight:400;font-family:'Liberation Sans', sans-serif;-webkit-text-stroke:0.3px #111;">Manager</div>
<div class="t" style="left:200.00px;width:800px;text-align:center;top:1080.19px;font-size:26px;color:#111111;font-weight:400;font-family:'Liberation Sans', sans-serif;-webkit-text-stroke:0.3px #111;">IT</div>
<svg class="s" style="left:690px;top:1088px;" width="24" height="14" viewBox="690 1088 24 14"><path d="M692,1090 H712 L702,1100 Z" fill="#3b3b3b"/></svg>
<div class="t" style="left:658.00px;width:800px;text-align:center;top:522.44px;font-size:27px;color:#ffffff;font-weight:400;font-family:'Liberation Sans', sans-serif;-webkit-text-stroke:0.5px #fff">Departments</div>
<div class="t" style="left:658.00px;width:800px;text-align:center;top:584.19px;font-size:26px;color:#111111;font-weight:400;font-family:'Liberation Sans', sans-serif;-webkit-text-stroke:0.3px #111;">Finance</div>
<div class="t" style="left:658.00px;width:800px;text-align:center;top:646.19px;font-size:26px;color:#111111;font-weight:400;font-family:'Liberation Sans', sans-serif;-webkit-text-stroke:0.3px #111;">HR</div>
<div class="t" style="left:658.00px;width:800px;text-align:center;top:708.19px;font-size:26px;color:#111111;font-weight:400;font-family:'Liberation Sans', sans-serif;-webkit-text-stroke:0.3px #111;">Sales</div>
<div class="t" style="left:658.00px;width:800px;text-align:center;top:770.19px;font-size:26px;color:#111111;font-weight:400;font-family:'Liberation Sans', sans-serif;-webkit-text-stroke:0.3px #111;">IT</div>
<div class="t" style="left:658.00px;width:800px;text-align:center;top:832.19px;font-size:26px;color:#111111;font-weight:400;font-family:'Liberation Sans', sans-serif;-webkit-text-stroke:0.3px #111;">Marketing</div>
<div class="r" style="left:506px;top:504px;width:218px;height:66px;border:4px solid #17a34d;box-sizing:border-box"></div>
<div class="r" style="left:510px;top:508px;width:210px;height:58px;border-style:solid;border-color:#fff;border-width:2px 2px 3px 1px;box-sizing:border-box"></div>
<div class="r" style="left:714px;top:560px;width:16px;height:16px;background:#17a34d;"></div>
<div class="r" style="left:2762px;top:402px;width:118px;height:1294px;background:#f1f1f1;"></div>
<div class="r" style="left:2762px;top:401px;width:118px;height:1px;background:#d0d0d0;"></div>
<div class="r" style="left:2762px;top:519px;width:118px;height:2px;background:#d6d6d6;"></div>
<div class="r" style="left:2762px;top:637px;width:118px;height:2px;background:#d6d6d6;"></div>
<div class="r" style="left:2762px;top:755px;width:118px;height:2px;background:#d6d6d6;"></div>
<div class="t" style="left:2421.00px;width:800px;text-align:center;top:476.42px;font-size:21px;color:#333333;font-weight:400;font-family:'Liberation Sans', sans-serif;">Zia</div>
<div class="t" style="left:2421.00px;width:800px;text-align:center;top:594.16px;font-size:22.6px;color:#333333;font-weight:400;font-family:'Liberation Sans', sans-serif;">Function</div>
<div class="t" style="left:2421.00px;width:800px;text-align:center;top:712.14px;font-size:21.8px;color:#333333;font-weight:400;font-family:'Liberation Sans', sans-serif;">Comments</div>
<svg class="s" style="left:2800px;top:540px;" width="42" height="40" viewBox="2800 540 42 40"><g transform="translate(2804,545) scale(1.0)" fill="#333333" stroke="#333333" stroke-linecap="round"><path d="M20.8,3.2 C19,0.2 15.8,1.5 14.6,6.5 L10.8,21 C9.8,25.5 8,29.5 3.5,28.2" fill="none" stroke-width="3.4"/><circle cx="20.5" cy="3.6" r="2.3" stroke="none"/><circle cx="3.0" cy="27.3" r="2.3" stroke="none"/><path d="M8.4,9.3 H16.4" stroke-width="2.4" stroke-linecap="butt"/><path d="M19.0,9.6 C21.8,8.8 22.6,10.5 23.6,13.5 L25.8,19.8 C26.6,22.6 28.6,22.4 31.3,19.3" fill="none" stroke-width="3"/><path d="M31.6,10.0 C28.4,9.0 26.6,11.0 24.2,14.5 L21.0,19.5 C19.8,21.5 18.5,21.8 17.2,21.2" fill="none" stroke-width="1.7"/><circle cx="31.6" cy="10.3" r="2.3" stroke="none"/><circle cx="17.2" cy="21.0" r="2.3" stroke="none"/></g></svg>
<svg class="s" style="left:2792px;top:360px;" width="70" height="40" viewBox="2792 360 70 40">
<path d="M2804.2,389.9 H2801.3 Q2798.3,389.9 2798.3,386.9 V368.8 Q2798.3,365.8 2801.3,365.8 H2816.7 Q2819.7,365.8 2819.7,368.8 V379.3" fill="none" stroke="#333333" stroke-width="2.2" stroke-linecap="round"/>
<path d="M2803.5,373 H2814.3 M2803.5,379.1 H2811.2" stroke="#333333" stroke-width="2.2" stroke-linecap="round"/>
<path d="M2806.8,388.4 Q2816.7,376.5 2826.6,388.4 Q2816.7,400.3 2806.8,388.4 Z" fill="#fff" stroke="#333333" stroke-width="2"/>
<circle cx="2816.6" cy="388.2" r="2.9" fill="none" stroke="#333333" stroke-width="1.8"/>
<path d="M2839.3,376.5 L2845.8,383 L2852.3,376.5" fill="none" stroke="#666" stroke-width="2" stroke-linecap="round" stroke-linejoin="round"/>
</svg>
<svg class="s" style="left:2800px;top:425px;" width="45" height="35" viewBox="2800 425 45 35">
<g fill="none" stroke="#333333" stroke-width="2" stroke-linecap="round" stroke-linejoin="round">
<path d="M2805.8,433.3 H2811.5 Q2814.5,433.3 2813,436.5 L2806.8,448 Q2805.5,452.1 2809,452.1 H2816 Q2818,452.1 2819.5,450 L2822.3,446.7"/>
<path d="M2821.7,436.5 L2818.8,442 Q2817.5,445 2820.5,446 L2833,451 Q2837.3,452.2 2836,448 L2832.8,439 Q2831,435.5 2828.5,438.5 L2822.3,446.7"/>
</g>
<circle cx="2824.9" cy="431.8" r="1.8" fill="#333333"/>
</svg>
<svg class="s" style="left:2800px;top:658px;" width="44" height="38" viewBox="2800 658 44 38">
<path d="M2809.1,664.9 H2832.9 Q2835.9,664.9 2835.9,667.9 V681.3 Q2835.9,684.3 2832.9,684.3 H2830.5 L2826.1,689.3 L2821.4,684.3 H2809.1 Q2806.1,684.3 2806.1,681.3 V667.9 Q2806.1,664.9 2809.1,664.9 Z" fill="none" stroke="#333333" stroke-width="1.9" stroke-linejoin="round"/>
<path d="M2811.6,670.9 H2824.5 M2811.6,676.2 H2817.8" stroke="#333333" stroke-width="2" stroke-linecap="round"/>
</svg>
<svg class="s" style="left:2008px;top:1570px;" width="36" height="36" viewBox="2008 1570 36 36"><path d="M2021,1576 H2031 V1583 H2038 V1593 H2031 V1601 H2021 V1593 H2014 V1583 H2021 Z" fill="#000"/><path d="M2019,1574 H2029 V1581 H2036 V1591 H2029 V1599 H2019 V1591 H2012 V1581 H2019 Z" fill="#000"/><path d="M2021,1576 H2027 V1583 H2034 V1589 H2027 V1597 H2021 V1589 H2014 V1583 H2021 Z" fill="#fff"/></svg>
<div class="r" style="left:2879px;top:830px;width:3px;height:116px;background:#7a7a7a;border-radius:2px;box-shadow:0 0 24px 10px rgba(0,0,0,0.045)"></div>
</body></html>
